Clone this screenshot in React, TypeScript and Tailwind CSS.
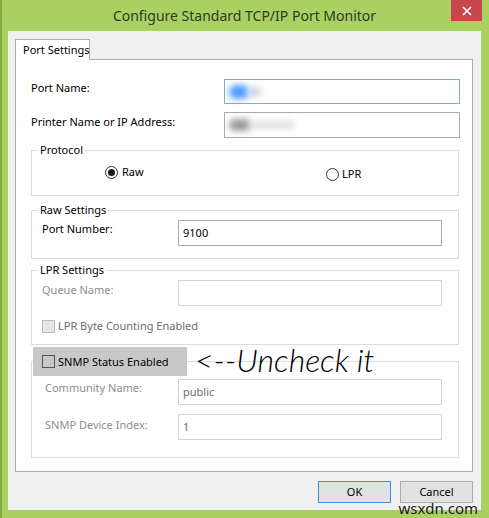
import React from "react";

const font = "font-['Noto_Sans',sans-serif]";

function Radio({ checked }: { checked?: boolean }) {
  return (
    <span className="w-[13px] h-[13px] rounded-full border border-[#333333] bg-white flex items-center justify-center shrink-0">
      {checked && <span className="w-[7px] h-[7px] rounded-full bg-[#1a1a1a]" />}
    </span>
  );
}

export default function App() {
  return (
    <div className={`relative w-[489px] h-[518px] bg-[#a9d162] border-l-2 border-[#84b042] flex flex-col ${font}`}>
      {/* Title bar */}
      <div className="h-[31px] flex items-start shrink-0">
        <div className="w-[36px] shrink-0" />
        <div className="flex-1 text-center text-[14px] leading-[20px] pt-[6px] text-[#2f3a22] whitespace-nowrap">
          Configure Standard TCP/IP Port Monitor
        </div>
        <div className="w-[31px] h-[21px] bg-[#c8454b] flex items-center justify-center shrink-0">
          <svg width="10" height="10" viewBox="0 0 10 10">
            <path d="M1 1 L9 9 M9 1 L1 9" stroke="#ffffff" strokeWidth="1.6" />
          </svg>
        </div>
        <div className="w-[7px] shrink-0" />
      </div>

      {/* Client area */}
      <div className="ml-[6px] mr-[8px] h-[479px] bg-[#f0f0f0] pl-[7px] pt-[8px] text-[11px] leading-[16px] text-[#000000] shrink-0">
        {/* Tab */}
        <div className="relative z-10 w-[75px] h-[21px] -mb-[1px] bg-white border border-b-0 border-[#adadad] flex items-center pl-[7px] whitespace-nowrap">
          Port Settings
        </div>
        {/* Panel */}
        <div className="relative w-[458px] h-[413px] bg-white border border-[#adadad] pl-[15px] pr-[13px] pt-[19px] whitespace-nowrap">
          {/* Port Name */}
          <div className="flex items-start">
            <div className="w-[193px] shrink-0 mt-[1px]">Port Name:</div>
            <div className="w-[236px] h-[25px] shrink-0 border border-[#7aaedf] flex items-center pl-[4px]">
              <span className="block w-[20px] h-[14px] rounded-full bg-[#4f9dff] blur-[3px]" />
              <span className="block w-[14px] h-[10px] rounded-full bg-[#c8d4e6] blur-[3px] -ml-[2px]" />
            </div>
          </div>
          {/* Printer Name */}
          <div className="flex items-start mt-[8px]">
            <div className="w-[193px] shrink-0 mt-[2px]">Printer Name or IP Address:</div>
            <div className="w-[236px] h-[26px] shrink-0 border border-[#ababab] flex items-center pl-[4px]">
              <span className="block w-[22px] h-[12px] rounded-full bg-[#9a9a9a] blur-[3px]" />
              <span className="block w-[46px] h-[8px] rounded-full bg-[#e2e2e2] blur-[3px] -ml-[2px]" />
            </div>
          </div>

          {/* Protocol */}
          <fieldset className="mt-[4px] h-[54px] border border-[#dcdcdc]">
            <legend className="ml-[6px] px-[2px] leading-[16px]">Protocol</legend>
            <div className="flex items-start mt-[6px] ml-[73px]">
              <div className="w-[221px] flex items-center gap-[4px] shrink-0">
                <Radio checked />
                <span>Raw</span>
              </div>
              <div className="flex items-center gap-[3px] mt-[2px]">
                <Radio />
                <span>LPR</span>
              </div>
            </div>
          </fieldset>

          {/* Raw Settings */}
          <fieldset className="mt-[6px] h-[57px] border border-[#dcdcdc]">
            <legend className="ml-[6px] px-[2px] leading-[16px]">Raw Settings</legend>
            <div className="flex items-start mt-[2px] ml-[10px]">
              <div className="w-[136px] shrink-0 mt-[1px]">Port Number:</div>
              <div className="w-[264px] h-[26px] shrink-0 border border-[#ababab] flex items-center pl-[4px]">9100</div>
            </div>
          </fieldset>

          {/* LPR Settings */}
          <fieldset className="mt-[3px] h-[83px] border border-[#dcdcdc]">
            <legend className="ml-[6px] px-[2px] leading-[16px]">LPR Settings</legend>
            <div className="flex items-start mt-[2px] ml-[10px]">
              <div className="w-[136px] shrink-0 mt-[2px] text-[#8d8d8d]">Queue Name:</div>
              <div className="w-[264px] h-[26px] shrink-0 border border-[#d4d4d4]" />
            </div>
            <div className="flex items-center mt-[12px] ml-[10px] gap-[3px] text-[#6d6d6d]">
              <span className="w-[13px] h-[13px] border border-[#bcbcbc] bg-[#e6e6e6] shrink-0" />
              <span>LPR Byte Counting Enabled</span>
            </div>
          </fieldset>

          {/* SNMP */}
          <fieldset className="mt-[2px] h-[111px] border border-[#dcdcdc]">
            <legend className="ml-[1px] w-[154px] h-[29px] bg-[#c8c8c8] flex items-center pl-[9px] gap-[3px]">
              <span className="w-[13px] h-[13px] border border-[#555555] shrink-0" />
              <span>SNMP Status Enabled</span>
            </legend>
            <div className="flex items-start mt-[3px] ml-[13px]">
              <div className="w-[133px] shrink-0 mt-[1px] text-[#8d8d8d]">Community Name:</div>
              <div className="w-[264px] h-[26px] shrink-0 border border-[#d4d4d4] flex items-center pl-[4px] text-[#6d6d6d]">public</div>
            </div>
            <div className="flex items-start mt-[9px] ml-[13px]">
              <div className="w-[133px] shrink-0 mt-[3px] text-[#8d8d8d]">SNMP Device Index:</div>
              <div className="w-[264px] h-[26px] shrink-0 border border-[#d4d4d4] flex items-center pl-[4px] text-[#6d6d6d]">1</div>
            </div>
          </fieldset>

          {/* Annotation overlay */}
          <div className="absolute left-[179px] top-[284px] text-[32px] leading-[32px] italic font-light text-black font-['Lato',sans-serif] whitespace-nowrap">
            &lt;--Uncheck it
          </div>
        </div>

        {/* Buttons */}
        <div className="w-[458px] flex justify-end gap-[9px] mt-[9px]">
          <button className="w-[73px] h-[22px] bg-[#e1e1e1] border border-[#3c8fdc] leading-[16px]">OK</button>
          <button className="w-[73px] h-[22px] bg-[#e1e1e1] border border-[#adadad] leading-[16px]">Cancel</button>
        </div>
      </div>

      {/* Watermark */}
      <div className="absolute right-[11px] bottom-[1px] text-[15px] leading-[18px] text-[#1c1c1c] font-['Noto_Sans',sans-serif]">
        wsxdn.com
      </div>
    </div>
  );
}
